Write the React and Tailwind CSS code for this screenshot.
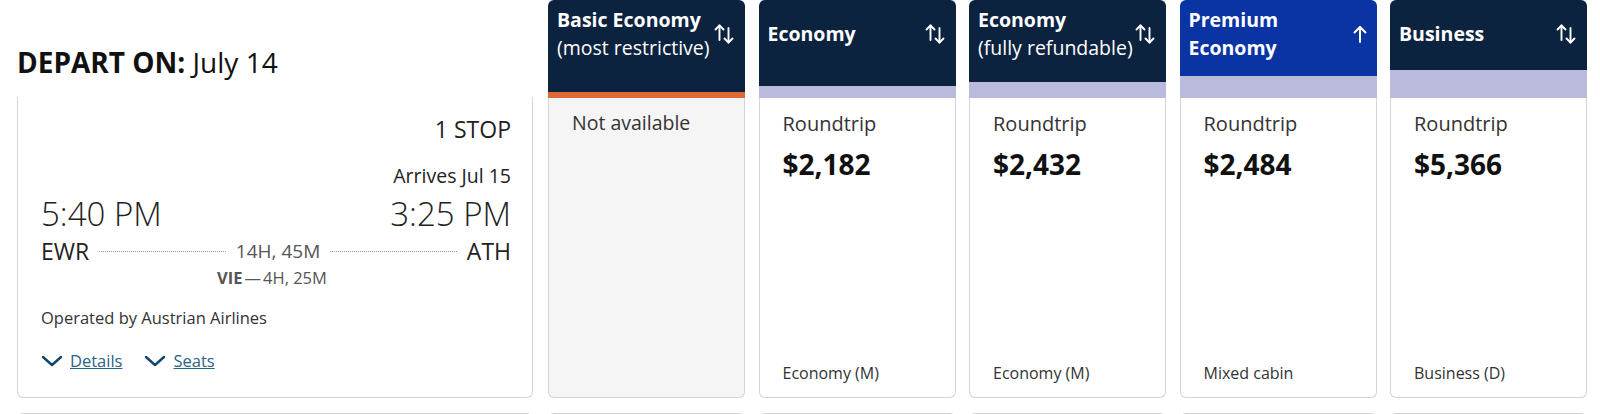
import React from "react";

const fares = [
  { title: "Basic Economy", sub: "(most restrictive)", dark: "h-[92px]", bar: "h-[6px] bg-[#dd6a35]", head: "bg-[#0c2340]", sort: "both", na: true },
  { title: "Economy", sub: null, dark: "h-[86px]", bar: "h-[12px] bg-[#b9badc]", head: "bg-[#0c2340]", sort: "both", price: "$2,182", cabin: "Economy (M)" },
  { title: "Economy", sub: "(fully refundable)", dark: "h-[82px]", bar: "h-[16px] bg-[#b9badc]", head: "bg-[#0c2340]", sort: "both", price: "$2,432", cabin: "Economy (M)" },
  { title: "Premium", sub: "Economy", subBold: true, dark: "h-[76px]", bar: "h-[22px] bg-[#b9badc]", head: "bg-[#0a34a4]", sort: "up", price: "$2,484", cabin: "Mixed cabin" },
  { title: "Business", sub: null, dark: "h-[70px]", bar: "h-[28px] bg-[#b9badc]", head: "bg-[#0c2340]", sort: "both", price: "$5,366", cabin: "Business (D)" },
];

const SortIcon = () => (
  <svg width="24" height="22" viewBox="0 0 24 22" fill="none" stroke="white" strokeWidth="1.9" strokeLinecap="round" strokeLinejoin="round">
    <path d="M7.5 17V2.5" />
    <path d="M3.5 6.5l4-4 4 4" />
    <path d="M16.5 5v14.5" />
    <path d="M12.5 15.5l4 4 4-4" />
  </svg>
);

const UpIcon = () => (
  <svg width="16" height="20" viewBox="0 0 16 20" fill="none" stroke="white" strokeWidth="2" strokeLinecap="round" strokeLinejoin="round">
    <path d="M8 18V3" />
    <path d="M2.5 8.5L8 3l5.5 5.5" />
  </svg>
);

const Chevron = () => (
  <svg width="22" height="12" viewBox="0 0 22 12" fill="none" stroke="#11466b" strokeWidth="2.4" strokeLinecap="round" strokeLinejoin="round">
    <path d="M2 2l9 8 9-8" />
  </svg>
);

const FareColumn = ({ f }) => (
  <div className="flex w-[197px] flex-col">
    <div className={`${f.dark} ${f.head} rounded-t-[6px]`}>
      <div className="flex h-[68px] items-center justify-between pl-[9px] pr-[9px] text-white">
        <div className="text-[19.5px] leading-[28px]">
          <div className="font-bold">{f.title}</div>
          {f.sub && <div className={f.subBold ? "font-bold" : ""}>{f.sub}</div>}
        </div>
        {f.sort === "up" ? <UpIcon /> : <SortIcon />}
      </div>
    </div>
    <div className={f.bar} />
    {f.na ? (
      <div className="h-[300px] rounded-b-[6px] border border-t-0 border-[#d4d4d4] bg-[#f5f5f5] pl-[23px] pt-[13px]">
        <div className="text-[19.5px] leading-[24px] text-[#333]">Not available</div>
      </div>
    ) : (
      <div className="flex h-[300px] flex-col rounded-b-[6px] border border-t-0 border-[#d4d4d4] bg-white pb-[13px] pl-[23px] pt-[14px]">
        <div className="text-[20px] leading-[24px] text-[#333]">Roundtrip</div>
        <div className="mt-[10px] text-[28px] font-bold leading-[36px] text-[#111]">{f.price}</div>
        <div className="mt-auto text-[16px] leading-[22px] text-[#333]">{f.cabin}</div>
      </div>
    )}
  </div>
);

export default function App() {
  return (
    <div className="h-[414px] w-[1600px] overflow-hidden bg-white font-['Open_Sans',sans-serif] text-[#222]">
      <div className="flex pl-[17px]">
        <div className="w-[516px]">
          <div className="h-[97px] pt-[43px] text-[28px] leading-[38px] text-[#111]">
            <span className="font-bold">DEPART ON:</span> July 14
          </div>
          <div className="h-[301px] rounded-b-[6px] border border-t-0 border-[#d4d4d4] pl-[23px] pr-[21px] pt-[17px]">
            <div className="text-right text-[23px] leading-[30px] text-[#222]">1 STOP</div>
            <div className="mt-[19px] text-right text-[19.5px] leading-[26px] text-[#222]">Arrives Jul 15</div>
            <div className="mt-[5px] flex justify-between text-[33px] font-light leading-[40px] text-[#222]">
              <span>5:40 PM</span>
              <span>3:25 PM</span>
            </div>
            <div className="mt-[3px] flex items-center text-[23px] leading-[28px]">
              <span className="text-[#222]">EWR</span>
              <span className="mx-[10px] flex-1 border-t border-dotted border-[#999]" />
              <span className="text-[19px] text-[#555]">14H, 45M</span>
              <span className="mx-[10px] flex-1 border-t border-dotted border-[#999]" />
              <span className="text-[#222]">ATH</span>
            </div>
            <div className="mt-[2px] pr-[8px] text-center text-[16.5px] leading-[22px] text-[#555]">
              <span className="font-bold">VIE</span>
              <span className="mx-[2px]">—</span>4H, 25M
            </div>
            <div className="mt-[17px] text-[16.5px] leading-[24px] text-[#333]">Operated by Austrian Airlines</div>
            <div className="mt-[19px] flex items-center gap-[22px] text-[16.5px] leading-[24px]">
              <span className="flex items-center gap-[7px]">
                <Chevron />
                <span className="text-[#2a6383] underline">Details</span>
              </span>
              <span className="flex items-center gap-[7px]">
                <Chevron />
                <span className="text-[#2a6383] underline">Seats</span>
              </span>
            </div>
          </div>
          <div className="mt-[15px] h-[20px] rounded-t-[6px] border border-[#d4d4d4]" />
        </div>
        <div className="ml-[15px] flex gap-[13.5px]">
          {fares.map((f, i) => (
            <div key={i}>
              <FareColumn f={f} />
              <div className="mt-[15px] h-[20px] w-[197px] rounded-t-[6px] border border-[#d4d4d4]" />
            </div>
          ))}
        </div>
      </div>
    </div>
  );
}
